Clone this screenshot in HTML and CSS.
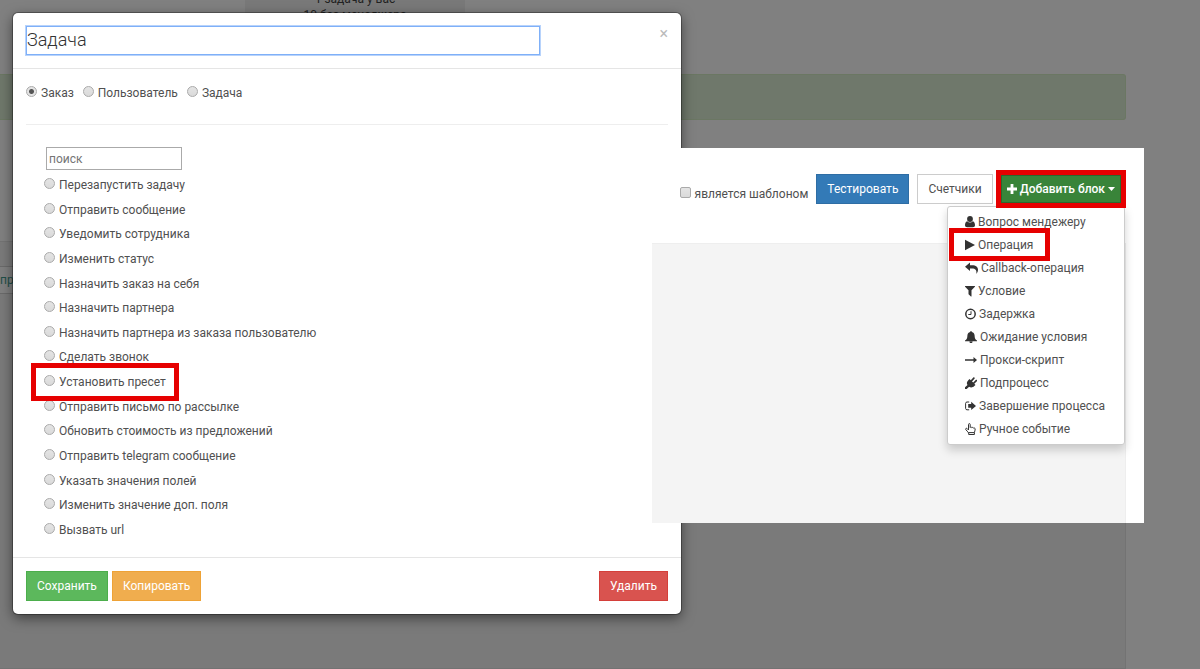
FILE: index.html
```html
<!DOCTYPE html>
<html lang="ru">

<head>
    <meta charset="UTF-8">
    <meta name="viewport" content="width=device-width, initial-scale=1.0">
    <title>Задача</title>
    <link rel="stylesheet" href="styles.css">
</head>

<body>
    <div class="page">
        <div class="page-tile">
            <span>1 задача у вас</span>
            <span>10 без менеджера</span>
        </div>
        <div class="page-alert"></div>
        <div class="page-canvas">
            <div class="page-row">про</div>
        </div>
    </div>

    <form class="modal">
        <header class="modal-header">
            <input class="title-input" type="text" value="Задача" aria-label="Название">
            <button class="close" type="button" aria-label="Закрыть">×</button>
        </header>
        <div class="modal-body">
            <div class="targets">
                <label><input type="radio" name="target" checked>Заказ</label>
                <label><input type="radio" name="target">Пользователь</label>
                <label><input type="radio" name="target">Задача</label>
            </div>
            <input class="search" type="text" placeholder="поиск" aria-label="поиск">
            <div class="operations">
                <label><input type="radio" name="operation">Перезапустить задачу</label>
                <label><input type="radio" name="operation">Отправить сообщение</label>
                <label><input type="radio" name="operation">Уведомить сотрудника</label>
                <label><input type="radio" name="operation">Изменить статус</label>
                <label><input type="radio" name="operation">Назначить заказ на себя</label>
                <label><input type="radio" name="operation">Назначить партнера</label>
                <label><input type="radio" name="operation">Назначить партнера из заказа пользователю</label>
                <label><input type="radio" name="operation">Сделать звонок</label>
                <label class="marked"><input type="radio" name="operation">Установить пресет</label>
                <label><input type="radio" name="operation">Отправить письмо по рассылке</label>
                <label><input type="radio" name="operation">Обновить стоимость из предложений</label>
                <label><input type="radio" name="operation">Отправить telegram сообщение</label>
                <label><input type="radio" name="operation">Указать значения полей</label>
                <label><input type="radio" name="operation">Изменить значение доп. поля</label>
                <label><input type="radio" name="operation">Вызвать url</label>
            </div>
        </div>
        <footer class="modal-footer">
            <button class="btn btn-success" type="button">Сохранить</button>
            <button class="btn btn-warning" type="button">Копировать</button>
            <button class="btn btn-danger" type="button">Удалить</button>
        </footer>
    </form>

    <section class="panel">
        <div class="toolbar">
            <label class="template"><input type="checkbox">является шаблоном</label>
            <button class="btn btn-primary" type="button">Тестировать</button>
            <button class="btn btn-default" type="button">Счетчики</button>
            <div class="dropdown">
                <button class="btn btn-add marked" type="button">
                    <svg width="10" height="10" viewBox="0 0 10 10"><path d="M3.6 0h2.800v3.600H10v2.800H6.400V10H3.600V6.400H0V3.600h3.600z"/></svg>
                    Добавить блок
                    <svg width="7" height="4" viewBox="0 0 7 4"><path d="M0 0h7L3.500 4z"/></svg>
                </button>
                <ul class="menu">
                    <li><a href="#"><svg width="10" height="12" viewBox="0 0 10 12"><circle cx="5" cy="3" r="2.900"/><path d="M2.200 5.200C.6 5.600 0 7.300 0 9.300 0 10.500.8 11.300 2.200 11.300h5.600C9.200 11.300 10 10.500 10 9.300 10 7.300 9.400 5.600 7.800 5.200 6.200 7 3.800 7 2.200 5.200z"/></svg>Вопрос мендежеру</a></li>
                    <li><a href="#" class="marked"><svg width="10" height="12" viewBox="0 0 10 12"><path d="M0 .8v10.400L10 6z"/></svg>Операция</a></li>
                    <li><a href="#"><svg width="13" height="12" viewBox="0 0 13 12"><path d="M5 .5v2.700h2C11 3.200 13 5 13 8c0 1.300-.5 2.500-1.300 3.600-.2.200-.4.100-.3-.2C11.800 8 10.400 6.400 7 6.400H5v2.700L0 4.800z"/></svg>Callback-операция</a></li>
                    <li><a href="#"><svg width="10" height="12" viewBox="0 0 10 12"><path d="M.3 1h9.400c.4 0 .4.400.2.700L6.500 5.300v5.900c0 .3-.3.400-.6.200L3.800 9.600c-.2-.2-.3-.4-.3-.6V5.300L.1 1.700C-.1 1.400 0 1 .3 1z"/></svg>Условие</a></li>
                    <li><a href="#"><svg width="11" height="12" viewBox="0 0 11 12"><circle class="line" cx="5.500" cy="6" r="4.700"/><path class="line thin" d="M6 3.200v3.300H3.300"/></svg>Задержка</a></li>
                    <li><a href="#"><svg width="12" height="12" viewBox="0 0 12 12"><path d="M6 0c.5 0 .8.300.8.900 1.900.4 2.800 1.900 2.800 3.600 0 2.700.8 4 2.400 5.100v.7H0v-.7c1.600-1.100 2.400-2.400 2.400-5.100 0-1.700.9-3.200 2.800-3.600C5.200.3 5.500 0 6 0zM4.400 10.500h3.200C7.500 11.500 7 12 6 12s-1.500-.5-1.600-1.500z"/></svg>Ожидание условия</a></li>
                    <li><a href="#"><svg width="12" height="12" viewBox="0 0 12 12"><path d="M0 5.200h8.500V3L12 6 8.500 9V6.800H0z"/></svg>Прокси-скрипт</a></li>
                    <li><a href="#"><svg width="12" height="12" viewBox="0 0 12 12"><path d="M3.300 3.200l1.200-1.100 1.300 1.200L8.300.6c.9-.7 1.900.3 1.200 1.200L7 4.400l1.200 1.200L10.700 3c.9-.7 1.900.3 1.200 1.200L9.300 6.700l1.200 1.200-1.200 1.100c-1.600 1.700-3.700 1.800-5.200.7L1.700 12H0v-1.700l2.500-2.400c-1.100-1.500-.8-3.200.8-4.700z"/></svg>Подпроцесс</a></li>
                    <li><a href="#"><svg width="11" height="12" viewBox="0 0 11 12"><path class="line thin" d="M4.200 2H2C1.200 2 .6 2.500.6 3.300v5.200c0 .8.600 1.300 1.400 1.300h2.200"/><path d="M6.200 1.700L11 5.900 6.200 10.100V7.800H3.200V4h3z"/></svg>Завершение процесса</a></li>
                    <li><a href="#"><svg width="11" height="12" viewBox="0 0 11 12"><path class="line thin" d="M3.500 7V1.500c0-1.200 1.700-1.200 1.700 0v3c.3-.7 1.400-.6 1.600.2.400-.5 1.300-.3 1.500.4.800-.4 1.900 0 1.900.9 0 1.500-.6 2.300-.8 3.500v2H3.700V10C2.900 8.500 1.500 7.700.8 6.700c-.6-.9.400-1.900 1.300-1.200L3.500 7M3.700 9.600h5.700"/></svg>Ручное событие</a></li>
                </ul>
            </div>
        </div>
        <div class="workspace"></div>
    </section>
</body>

</html>
```
FILE: styles.css
```css
* {
    box-sizing: border-box;
}

body {
    margin: 0;
    height: 100vh;
    overflow: hidden;
    background-color: #808080;
    color: #505050;
    font-family: Roboto, "Liberation Sans", sans-serif;
    font-size: 12px;
    line-height: 20px;
}

input,
button {
    font-family: inherit;
    font-size: inherit;
    color: inherit;
    margin: 0;
}

/* dimmed page behind the modal */
.page {
    display: flex;
    flex-direction: column;
    height: 100%;
    padding-right: 74px;
}

.page-tile {
    display: flex;
    flex-direction: column;
    flex: none;
    justify-content: flex-end;
    width: 220px;
    height: 23px;
    margin-left: 245px;
    background-color: #797979;
    color: #222;
    line-height: 16px;
    text-align: center;
}

.page-alert {
    flex: none;
    height: 46px;
    margin-top: 51px;
    border: 1px solid #6b7763;
    border-left: 0;
    border-radius: 0 3px 3px 0;
    background-color: #6f786b;
}

.page-canvas {
    flex: 1;
    margin-top: 121px;
    padding-top: 24px;
    border: 1px solid #737373;
    border-left: 0;
    background-color: #7a7a7a;
}

.page-row {
    width: 100px;
    padding: 3px 0;
    border: 1px solid #6a6a6a;
    border-left: 0;
    background-color: #808080;
    color: #1f4f48;
}

/* modal */
.modal {
    position: absolute;
    top: 13px;
    left: 13px;
    width: 55%;
    min-width: 668px;
    border-radius: 5px;
    background-color: #fff;
    box-shadow: 0 0 0 1px rgba(0, 0, 0, 0.3), 0 4px 13px rgba(0, 0, 0, 0.5);
}

.modal-header {
    display: flex;
    align-items: flex-start;
    justify-content: space-between;
    padding: 13px;
    border-bottom: 1px solid #e5e5e5;
}

.title-input {
    width: 80%;
    height: 29px;
    padding: 0 0 2px;
    border: 1px solid #7fb0f8;
    outline: 1px solid #b8d3fb;
    color: #333;
    font-size: 18px;
    font-weight: 300;
}

.close {
    padding: 0;
    border: 0;
    background: none;
    color: #bbb;
    font-size: 16px;
    line-height: 16px;
}

.modal-body {
    padding: 14px 13px 17px;
}

label {
    display: flex;
    align-items: center;
    white-space: nowrap;
}

input[type="radio"],
input[type="checkbox"] {
    appearance: none;
    flex: none;
    width: 11px;
    height: 11px;
    margin: 0 4px 3px 0;
    border: 1px solid #aaa;
    border-radius: 50%;
    background: linear-gradient(#e4e4e4, #dadada);
}

input[type="radio"]:checked {
    background: radial-gradient(circle, #555 0 2px, #e4e4e4 3px);
}

input[type="checkbox"] {
    border-radius: 2px;
}

.targets {
    display: flex;
    gap: 9px;
    padding-bottom: 21px;
    border-bottom: 1px solid #eee;
}

.search {
    display: block;
    width: 136px;
    height: 23px;
    margin: 22px 0 5px 20px;
    padding: 0 2px;
    border: 1px solid #aaa;
}

.operations {
    display: flex;
    flex-direction: column;
    align-items: flex-start;
    justify-content: space-between;
    height: 365px;
    padding-left: 18px;
}

.modal-footer {
    display: flex;
    gap: 4px;
    padding: 13px;
    border-top: 1px solid #e5e5e5;
}

.btn {
    height: 30px;
    padding: 0 10px;
    border: 1px solid;
    color: #fff;
    white-space: nowrap;
}

.btn-success {
    border-color: #4cae4c;
    background-color: #5cb85c;
}

.btn-warning {
    border-color: #eea236;
    background-color: #f0ad4e;
}

.btn-danger {
    margin-left: auto;
    border-color: #d43f3a;
    background-color: #d9534f;
}

.btn-primary {
    border-color: #2e6da4;
    background-color: #337ab7;
}

.btn-default {
    border-color: #ccc;
    background-color: #fff;
    color: #505050;
}

.btn-add {
    display: flex;
    align-items: center;
    gap: 3px;
    height: 28px;
    padding: 0 5px;
    border-color: #2d672d;
    background-color: #398439;
    font-weight: 500;
}

/* red frame drawn round the highlighted items */
.marked {
    position: relative;
    z-index: 1;
    outline: 5px solid #e60000;
}

.operations .marked {
    margin: 0 -4px;
    padding: 0 4px;
    outline-offset: 4px;
}

/* block editor over the page */
.panel {
    position: absolute;
    top: 148px;
    right: 56px;
    left: 652px;
    padding-right: 18px;
    background-color: #fff;
}

.toolbar {
    display: flex;
    align-items: center;
    justify-content: flex-end;
    gap: 8px;
    height: 95px;
    padding: 0 5px 13px 0;
}

.template {
    padding-top: 10px;
}

.workspace {
    height: 280px;
    border: 1px solid #eee;
    border-left: 0;
    border-bottom: 0;
    background-color: #f4f4f4;
}

.dropdown {
    position: relative;
}

.menu {
    position: absolute;
    top: 100%;
    right: -4px;
    width: 178px;
    margin: 3px 0 0;
    padding: 3px 0 4px 6px;
    border: 1px solid #ccc;
    border-radius: 3px;
    background-color: #fff;
    box-shadow: 0 5px 10px rgba(0, 0, 0, 0.18);
    list-style: none;
}

.menu a {
    display: flex;
    align-items: center;
    gap: 3px;
    width: fit-content;
    height: 23px;
    padding: 0 12px 0 11px;
    color: #505050;
    text-decoration: none;
    white-space: nowrap;
}

svg {
    flex: none;
    fill: currentColor;
}

.menu svg {
    color: #333;
}

.line {
    fill: none;
    stroke: currentColor;
    stroke-width: 1.5;
}

.thin {
    stroke-width: 1;
}
```
